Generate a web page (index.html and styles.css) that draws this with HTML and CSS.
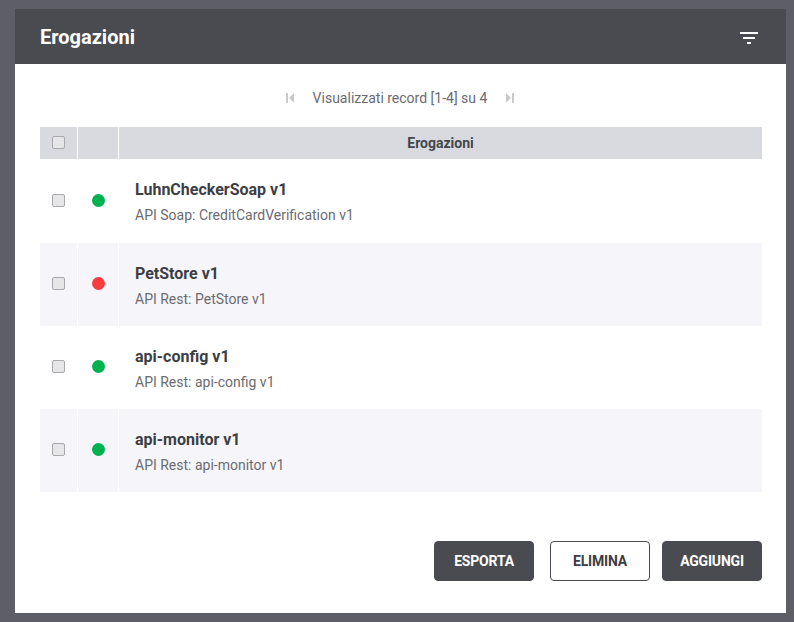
FILE: index.html
```html
<!DOCTYPE html>
<html lang="it">
<head>
  <meta charset="UTF-8">
  <title>Erogazioni</title>
  <link rel="stylesheet" href="styles.css">
</head>
<body>
  <div class="panel">
    <div class="panel-header">
      <h2 class="panel-title">Erogazioni</h2>
      <svg class="filter-icon" width="20" height="14" viewBox="0 0 20 14">
        <rect x="0" y="1" width="18" height="2" fill="#fff"/>
        <rect x="3" y="6" width="12" height="2" fill="#fff"/>
        <rect x="7" y="11" width="4" height="2" fill="#fff"/>
      </svg>
    </div>

    <div class="panel-body">
      <div class="pager">
        <svg class="pager-icon" width="10" height="12" viewBox="0 0 10 12">
          <rect x="1" y="1" width="2" height="10" fill="#c9c9ce"/>
          <polygon points="9,1 9,11 4,6" fill="#c9c9ce"/>
        </svg>
        <span class="pager-text">Visualizzati record [1-4] su 4</span>
        <svg class="pager-icon" width="10" height="12" viewBox="0 0 10 12">
          <polygon points="1,1 1,11 6,6" fill="#c9c9ce"/>
          <rect x="7" y="1" width="2" height="10" fill="#c9c9ce"/>
        </svg>
      </div>

      <table class="list">
        <thead>
          <tr>
            <th class="col-check"><span class="check"></span></th>
            <th class="col-status"></th>
            <th class="col-name">Erogazioni</th>
          </tr>
        </thead>
        <tbody>
          <tr class="first">
            <td class="col-check"><span class="check"></span></td>
            <td class="col-status"><span class="dot ok"></span></td>
            <td class="col-name">
              <div class="item-title">LuhnCheckerSoap v1</div>
              <div class="item-sub">API Soap: CreditCardVerification v1</div>
            </td>
          </tr>
          <tr class="alt">
            <td class="col-check"><span class="check"></span></td>
            <td class="col-status"><span class="dot ko"></span></td>
            <td class="col-name">
              <div class="item-title">PetStore v1</div>
              <div class="item-sub">API Rest: PetStore v1</div>
            </td>
          </tr>
          <tr>
            <td class="col-check"><span class="check"></span></td>
            <td class="col-status"><span class="dot ok"></span></td>
            <td class="col-name">
              <div class="item-title">api-config v1</div>
              <div class="item-sub">API Rest: api-config v1</div>
            </td>
          </tr>
          <tr class="alt">
            <td class="col-check"><span class="check"></span></td>
            <td class="col-status"><span class="dot ok"></span></td>
            <td class="col-name">
              <div class="item-title">api-monitor v1</div>
              <div class="item-sub">API Rest: api-monitor v1</div>
            </td>
          </tr>
        </tbody>
      </table>

      <div class="actions">
        <button class="btn btn-dark">ESPORTA</button>
        <button class="btn btn-light">ELIMINA</button>
        <button class="btn btn-dark">AGGIUNGI</button>
      </div>
    </div>
  </div>
</body>
</html>
```

FILE: styles.css
```css
body {
  margin: 0;
  background-color: #5d5e66;
  font-family: Roboto, "Liberation Sans", sans-serif;
}

.panel {
  margin: 9px 0 0 15px;
  width: 771px;
  height: 604px;
  background-color: #fff;
  display: flex;
  flex-direction: column;
}

.panel-header {
  height: 55px;
  background-color: #4a4b50;
  display: flex;
  align-items: center;
  justify-content: space-between;
  padding: 0 26px 0 25px;
}

.panel-title {
  margin: 0;
  color: #fff;
  font-size: 20px;
  font-weight: bold;
}

.filter-icon {
  margin-top: 2px;
}

.panel-body {
  padding: 0 24px 0 25px;
}

.pager {
  display: flex;
  justify-content: center;
  align-items: center;
  gap: 18px;
  margin-top: 24px;
  height: 20px;
  padding-right: 2px;
}

.pager-text {
  font-size: 14px;
  color: #6b6b72;
}

.list {
  margin-top: 19px;
  width: 722px;
  border-collapse: collapse;
}

.list th {
  height: 32px;
  background-color: #d9dadf;
  font-size: 14px;
  font-weight: bold;
  color: #45464c;
  padding: 0;
}

.list td {
  height: 83px;
  padding: 0;
  background-color: #fff;
}

.list tr.first td {
  height: 84px;
}

.list tr.alt td {
  background-color: #f6f6fa;
}

.col-check {
  width: 37px;
  border-right: 1px solid #fff;
  text-align: center;
}

.col-status {
  width: 40px;
  border-right: 1px solid #fff;
  text-align: center;
}

.list td.col-name {
  text-align: left;
  padding-left: 16px;
  vertical-align: top;
}

.check {
  display: inline-block;
  width: 11px;
  height: 11px;
  border: 1px solid #a9a9ad;
  border-radius: 2px;
  background-color: #e6e6e8;
  vertical-align: middle;
  margin-bottom: 4px;
}

th .check {
  margin-bottom: 3px;
}

.dot {
  display: inline-block;
  width: 13px;
  height: 13px;
  border-radius: 50%;
  vertical-align: middle;
  margin-bottom: 4px;
}

.dot.ok {
  background-color: #00b24f;
}

.dot.ko {
  background-color: #f93b3f;
}

.item-title {
  margin-top: 21px;
  font-size: 16px;
  font-weight: bold;
  line-height: 20px;
  color: #3d3e44;
}

.item-sub {
  margin-top: 6px;
  font-size: 14px;
  line-height: 18px;
  color: #6b6b72;
}

.actions {
  display: flex;
  justify-content: flex-end;
  gap: 12px;
  margin-top: 49px;
}

.btn {
  width: 100px;
  height: 40px;
  border-radius: 4px;
  font-family: Roboto, "Liberation Sans", sans-serif;
  font-size: 14px;
  font-weight: bold;
  letter-spacing: -0.2px;
  cursor: pointer;
}

.btn-dark {
  background-color: #4a4b50;
  border: 1px solid #4a4b50;
  color: #fff;
}

.btn-light {
  margin-left: 4px;
  background-color: #fff;
  border: 1px solid #4a4b50;
  color: #3d3e44;
}
```
